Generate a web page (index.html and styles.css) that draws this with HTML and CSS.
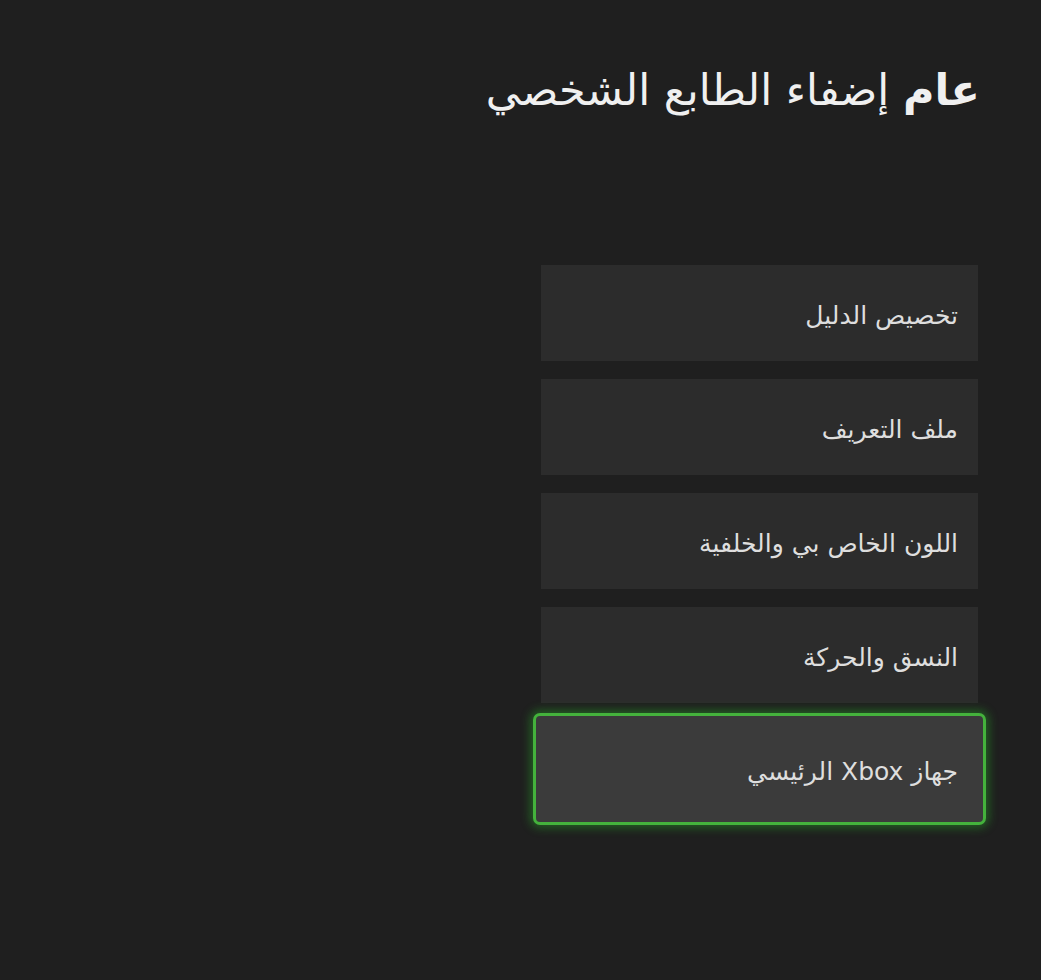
FILE: index.html
```html
<!DOCTYPE html>
<html lang="ar" dir="rtl">
<head>
<meta charset="utf-8">
<title>إضفاء الطابع الشخصي</title>
<link rel="stylesheet" href="styles.css">
</head>
<body>
<main class="page">
  <h1 class="title"><span class="title-strong">عام</span> إضفاء الطابع الشخصي</h1>
  <ul class="menu">
    <li class="menu-item">تخصيص الدليل</li>
    <li class="menu-item">ملف التعريف</li>
    <li class="menu-item">اللون الخاص بي والخلفية</li>
    <li class="menu-item">النسق والحركة</li>
    <li class="menu-item is-focused">جهاز Xbox الرئيسي</li>
  </ul>
</main>
</body>
</html>
```

FILE: styles.css
```css
html, body {
  margin: 0;
  padding: 0;
  background: #1f1f1f;
  height: 100%;
}
body {
  font-family: "DejaVu Sans", "Noto Sans", sans-serif;
  color: #e6e6e6;
}
.page {
  direction: rtl;
  padding: 60px 61px 0 0;
  display: flex;
  flex-direction: column;
  align-items: flex-start;
}
.title {
  margin: 0;
  font-size: 43px;
  font-weight: 400;
  line-height: 60px;
  color: #f0f0f0;
}
.title-strong {
  font-weight: 700;
}
.menu {
  list-style: none;
  margin: 145px 2px 0 0;
  padding: 0;
  display: flex;
  flex-direction: column;
  gap: 18px;
  width: 437px;
}
.menu-item {
  height: 96px;
  box-sizing: border-box;
  background: #2c2c2c;
  display: flex;
  align-items: center;
  padding: 4px 20px 0;
  font-size: 25px;
  color: #dedede;
}
.menu-item.is-focused {
  height: 112px;
  margin: -8px -8px 0 -8px;
  padding: 4px 25px 0;
  background: #3b3b3b;
  border: 3px solid #44b23c;
  border-radius: 7px;
  box-shadow: 0 0 10px 3px rgba(40, 170, 40, 0.45);
}
```
